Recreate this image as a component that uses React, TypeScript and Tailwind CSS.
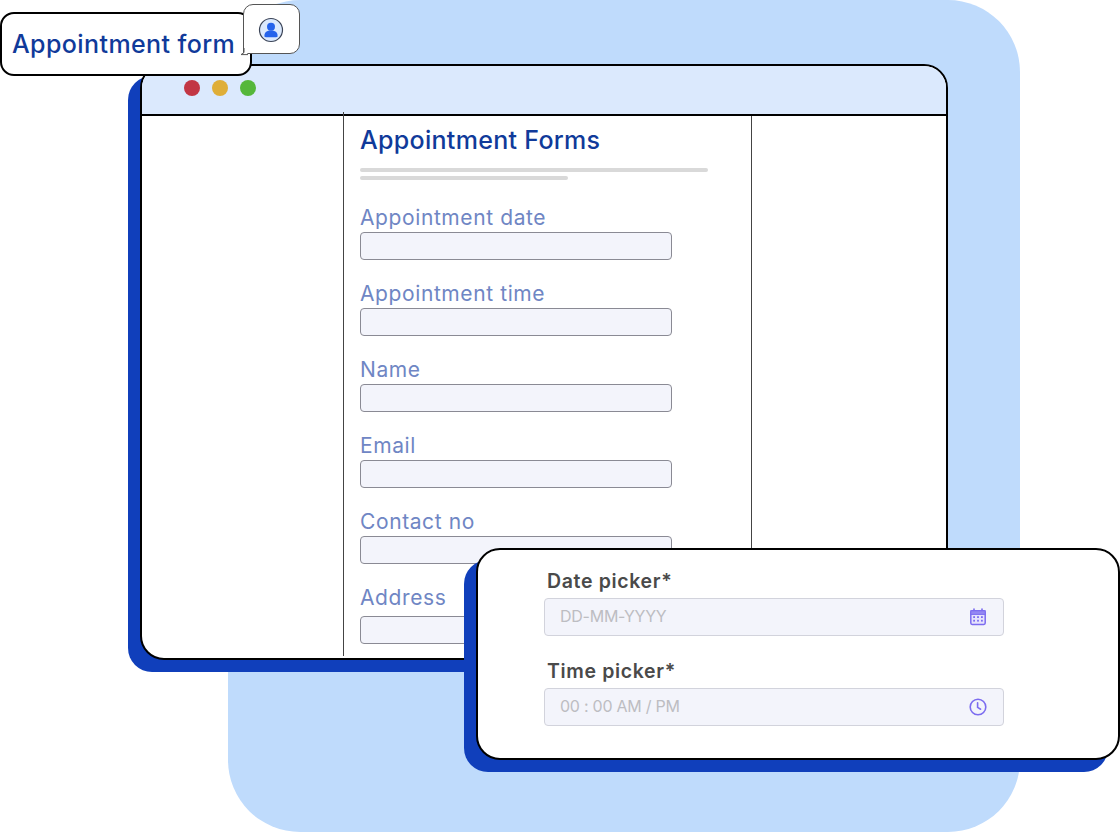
const FONT = "font-['Inter','Noto_Sans',sans-serif]"

const FORM_FIELDS = [
  { label: 'Appointment date', inputClass: '' },
  { label: 'Appointment time', inputClass: '' },
  { label: 'Name', inputClass: '' },
  { label: 'Email', inputClass: '' },
  { label: 'Contact no', inputClass: '' },
  { label: 'Address', inputClass: 'mt-[4px]' },
]

function CalendarIcon() {
  return (
    <svg width="18" height="18" viewBox="0 0 18 18" fill="none">
      <path d="M5 1v3M13 1v3" stroke="#7c6cf0" strokeWidth="1.6" strokeLinecap="round" />
      <rect x="1.8" y="2.8" width="14.4" height="13.6" rx="1.4" fill="#e6e3fc" stroke="#7c6cf0" strokeWidth="1.5" />
      <rect x="1.8" y="2.8" width="14.4" height="3.6" fill="#9488f3" stroke="#7c6cf0" strokeWidth="1" />
      <g fill="#7c6cf0">
        <rect x="4.2" y="8.2" width="1.8" height="1.8" />
        <rect x="8.1" y="8.2" width="1.8" height="1.8" />
        <rect x="12" y="8.2" width="1.8" height="1.8" />
        <rect x="4.2" y="11.8" width="1.8" height="1.8" />
        <rect x="8.1" y="11.8" width="1.8" height="1.8" />
        <rect x="12" y="11.8" width="1.8" height="1.8" />
      </g>
    </svg>
  )
}

function ClockIcon() {
  return (
    <svg width="18" height="18" viewBox="0 0 18 18" fill="none" stroke="#7c6cf0" strokeWidth="1.6" strokeLinecap="round" strokeLinejoin="round">
      <circle cx="9" cy="9" r="7.8" />
      <path d="M8.6 4.8v4.6l3 1.8" />
    </svg>
  )
}

function PersonAvatar() {
  return (
    <svg width="26" height="26" viewBox="0 0 26 26">
      <circle cx="13" cy="13" r="11.5" fill="#dbe9fd" stroke="#3a4356" strokeWidth="1.2" />
      <circle cx="13" cy="9.8" r="4" fill="#2563eb" />
      <path d="M6.4 19c0-3.8 2.6-5.4 6.6-5.4s6.6 1.6 6.6 5.4c0 .8-.6 1.2-1.4 1.2H7.8c-.8 0-1.4-.4-1.4-1.2z" fill="#2563eb" />
    </svg>
  )
}

function PickerField({ label, placeholder, icon }: { label: string; placeholder: string; icon: React.ReactNode }) {
  return (
    <div className="flex flex-col">
      <label className="h-[28px] pl-[3px] text-[19.5px] leading-[26px] font-semibold tracking-[0.65px] text-[#4a4a4a]">{label}</label>
      <div className="mt-[2px] flex h-[38px] items-center justify-between rounded-[4px] border border-[#d2d3dc] bg-[#f3f4fb] pl-[15px] pr-[16px]">
        <span className="pb-[2px] text-[16px] tracking-[-0.25px] text-[#bdbdc2]">{placeholder}</span>
        {icon}
      </div>
    </div>
  )
}

export default function App() {
  return (
    <div className={`relative h-[832px] w-[1120px] overflow-hidden bg-white ${FONT}`}>
      {/* Blue backdrop */}
      <div className="absolute left-[228px] top-0 h-[832px] w-[792px] rounded-[72px] bg-[#bfdbfc]" />

      {/* Browser window */}
      <div className="absolute left-[140px] top-[64px] flex h-[596px] w-[808px] flex-col rounded-[24px] border-2 border-black bg-white shadow-[-12px_12px_0_#103fbb]">
        <div className="flex h-[50px] items-center gap-[12px] rounded-t-[22px] border-b-2 border-black bg-[#dbe9fd] pb-[4px] pl-[42px]">
          <span className="h-[16px] w-[16px] rounded-full bg-[#c23644]" />
          <span className="h-[16px] w-[16px] rounded-full bg-[#dfae38]" />
          <span className="h-[16px] w-[16px] rounded-full bg-[#55b73a]" />
        </div>
        <div className="flex h-[540px]">
          <div className="w-[201px]" />
          <div className="-mt-[4px] h-[544px] w-[1px] bg-[#444]" />
          <main className="w-[407px] px-[16px] pt-[8px]">
            <h1 className="text-[25px] leading-[32px] font-medium tracking-[0.3px] text-[#103a9a]">Appointment Forms</h1>
            <div className="mt-[12px] h-[4px] w-[348px] rounded-full bg-[#d9d9d9]" />
            <div className="mt-[4px] h-[4px] w-[208px] rounded-full bg-[#d9d9d9]" />
            <div className="mt-[24px] flex flex-col gap-[20px]">
              {FORM_FIELDS.map((field) => (
                <div key={field.label}>
                  <p className="h-[28px] text-[21px] leading-[27px] tracking-[0.6px] text-[#6f86c4]">{field.label}</p>
                  <div className={`h-[28px] w-[312px] rounded-[4px] border border-[#8a8a94] bg-[#f3f4fb] ${field.inputClass}`} />
                </div>
              ))}
            </div>
          </main>
          <div className="h-[540px] w-[1px] bg-[#444]" />
        </div>
      </div>

      {/* Picker card */}
      <div className="absolute left-[476px] top-[548px] h-[212px] w-[644px] rounded-[24px] border-2 border-black bg-white pl-[66px] pt-[18px] shadow-[-12px_12px_0_#103fbb]">
        <div className="flex w-[460px] flex-col gap-[22px]">
          <PickerField label="Date picker*" placeholder="DD-MM-YYYY" icon={<CalendarIcon />} />
          <PickerField label="Time picker*" placeholder="00 : 00 AM / PM" icon={<ClockIcon />} />
        </div>
      </div>

      {/* Appointment form tag */}
      <div className="absolute left-0 top-[12px] flex h-[64px] w-[252px] items-center rounded-[14px] border-2 border-black bg-white pl-[10px] pt-[1px]">
        <span className="text-[25px] font-medium tracking-[0.4px] text-[#103a9a]">Appointment form</span>
      </div>

      {/* Avatar bubble */}
      <div className="absolute left-[243px] top-[4px] flex h-[50px] w-[57px] items-center justify-center rounded-[10px] rounded-bl-none border border-[#555] bg-white pr-[2px] pt-[2px]">
        <PersonAvatar />
        <svg className="absolute -bottom-[3px] -left-[4px]" width="8" height="8" viewBox="0 0 8 8">
          <path d="M4 0v4.6L1 6.6h7" fill="white" stroke="#555" strokeWidth="1" />
        </svg>
      </div>
    </div>
  )
}
